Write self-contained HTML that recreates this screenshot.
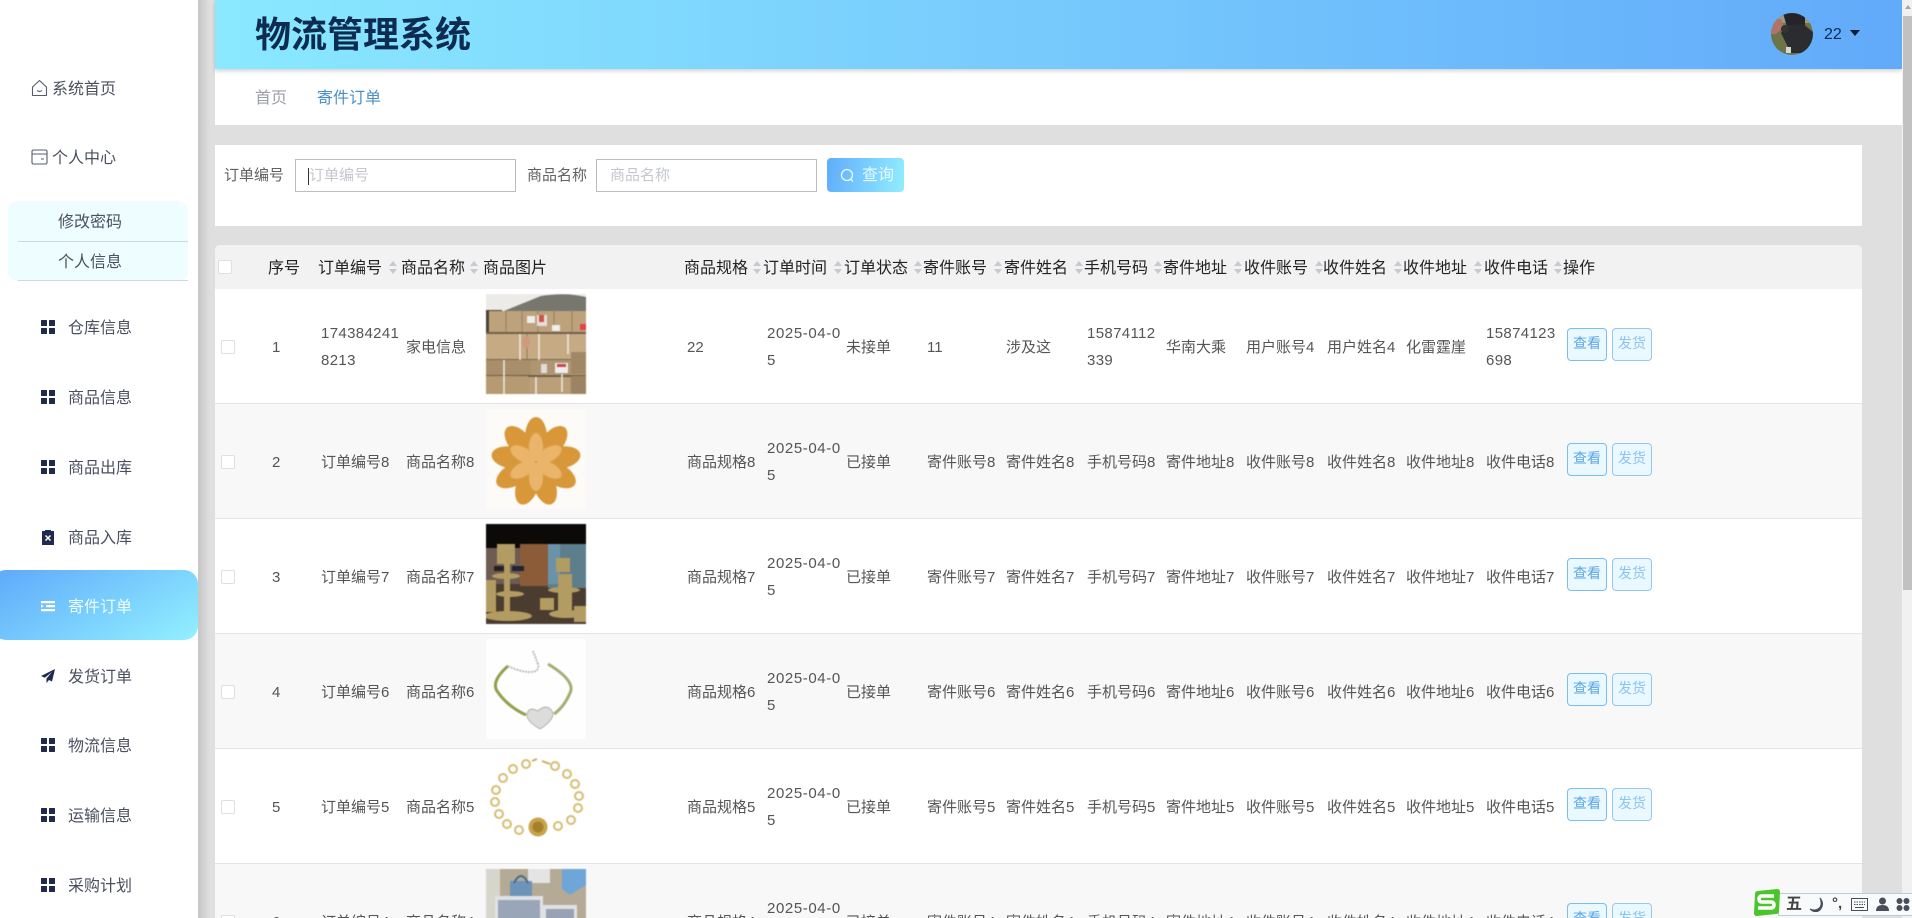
<!DOCTYPE html>
<html lang="zh"><head><meta charset="utf-8"><title>物流管理系统</title>
<style>
*{box-sizing:border-box}
html,body{margin:0;padding:0;width:1912px;height:918px;overflow:hidden;background:#dfdfdf;font-family:"Liberation Sans","Noto Sans CJK SC",sans-serif;color:#444}
#page{position:relative;width:1912px;height:918px;overflow:hidden;background:#dfdfdf}
.a{position:absolute}
#side{left:0;top:0;width:198px;height:918px;background:#fff;z-index:3}
#shadow{left:198px;top:0;width:12px;height:918px;background:linear-gradient(90deg,#c6c6c6,#dfdfdf);z-index:2}
.it{position:absolute;left:68px;font-size:16px;line-height:24px;color:#4b5060;white-space:nowrap;transform:translateY(-10px)}
.ic{position:absolute;left:41px;width:14px;height:14px;transform:translateY(-7px)}
.grid{display:grid;grid-template-columns:6px 6px;grid-template-rows:6px 6px;gap:2px}
.grid i{background:#1f2a4d;display:block;border-radius:.5px}
#hd{left:215px;top:0;width:1687px;height:69px;background:linear-gradient(90deg,#8ae9ff,#62aafa);box-shadow:0 2px 4px rgba(0,0,0,.18);z-index:2}
#bc{left:215px;top:69px;width:1687px;height:56px;background:#fff}
#q{left:215px;top:145px;width:1647px;height:81px;background:#fff}
.inp{position:absolute;top:159px;height:33px;width:221px;background:#fff;border:1px solid #bdbdbd;font-size:15px;line-height:31px;color:#c4c7cd}
.lab{position:absolute;top:164px;font-size:15px;line-height:24px;color:#606266}
#thbg{left:215px;top:245px;width:1647px;height:44px;background:#f2f2f2;border-radius:5px 5px 0 0}
.th{position:absolute;top:257px;font-size:16px;line-height:24px;color:#222;white-space:nowrap}
.car{position:absolute;top:261px;width:8px;height:13px;margin-left:-1px}
.car:before,.car:after{content:"";position:absolute;left:0;border-left:4px solid transparent;border-right:4px solid transparent}
.car:before{top:0;border-bottom:5px solid #c6cad0}
.car:after{bottom:0;border-top:5px solid #c6cad0}
table{position:absolute;left:215px;top:289px;width:1647px;table-layout:fixed;border-collapse:separate;border-spacing:0;font-size:15px;line-height:27px;color:#555}
td{height:115px;padding:2px 0 0 3px;border-bottom:1px solid #e4e4e4;vertical-align:middle;white-space:nowrap;overflow:hidden;background:#fff;position:relative}
tr:nth-child(even) td{background:#f8f8f8}
.n{letter-spacing:.35px}.d{letter-spacing:.6px}
td.im{vertical-align:top;padding:5px 0 0 1px}
td.im svg{display:block;width:100px;height:100px;filter:blur(.4px)}
td.op{vertical-align:top;padding:39px 0 0 3px}
.b{display:inline-block;width:40px;height:33px;border:1px solid #7cbdf0;border-radius:4px;background:#eaf8ff;color:#5aa6e6;font-size:14px;line-height:29px;text-align:center;margin-right:5px;vertical-align:top}
.b.l{color:#8cc4f2;border-color:#92c8f2}
.cb{position:absolute;left:6px;top:51px;width:14px;height:14px;background:#fff;border:1px solid #dcdfe6;border-radius:2px}
</style></head><body><div id="page">

<div class="a" id="side">
<svg class="ic" style="left:31px;top:88px;width:17px;height:18px;transform:translateY(-9px)" viewBox="0 0 17 18" fill="none" stroke="#555c70" stroke-width="1.1"><path d="M8.5 1.5L1.5 8v8.5h14V8z" stroke-linejoin="round"/><path d="M6 11.5q2.5 2 5 0"/></svg>
<div class="it" style="left:52px;top:88px">系统首页</div>
<svg class="ic" style="left:31px;top:157px;width:17px;height:16px;transform:translateY(-8px)" viewBox="0 0 17 16" fill="none" stroke="#555c70" stroke-width="1.1"><rect x="1" y="1" width="15" height="14" rx="1.5"/><path d="M1 5h15M10 10h3"/></svg>
<div class="it" style="left:52px;top:157px">个人中心</div>

<div class="a" style="left:8px;top:201px;width:180px;height:80px;background:#eefdff;border-radius:10px"></div>
<div class="a" style="left:18px;top:241px;width:170px;height:1px;background:#cfd9de"></div>
<div class="a" style="left:18px;top:280px;width:170px;height:1px;background:#cfd9de"></div>
<div class="it" style="left:58px;top:221px">修改密码</div>
<div class="it" style="left:58px;top:261px">个人信息</div>

<div class="ic grid" style="top:327px"><i></i><i></i><i></i><i></i></div><div class="it" style="top:327px">仓库信息</div>
<div class="ic grid" style="top:397px"><i></i><i></i><i></i><i></i></div><div class="it" style="top:397px">商品信息</div>
<div class="ic grid" style="top:467px"><i></i><i></i><i></i><i></i></div><div class="it" style="top:467px">商品出库</div>
<svg class="ic" style="top:537px;height:16px;transform:translateY(-8px)" viewBox="0 0 14 16"><path d="M1 2h3V1h6v1h3v14H1z" fill="#1f2a4d"/><path d="M4.5 6.5l5 5M9.5 6.5l-5 5" stroke="#fff" stroke-width="1.5"/></svg>
<div class="it" style="top:537px">商品入库</div>

<div class="a" style="left:-8px;top:570px;width:206px;height:70px;border-radius:14px;background:linear-gradient(150deg,#5ea8fb,#92f1ff)"></div>
<svg class="ic" style="top:606px" viewBox="0 0 14 14" fill="#fff"><path d="M0 2h14v2.200H0zM5 6h9v2.200H5zM0 10h14v2.200H0zM0 5.500l3 1.600-3 1.600z"/></svg>
<div class="it" style="top:606px;color:#eefcff">寄件订单</div>
<svg class="ic" style="top:676px" viewBox="0 0 14 14"><path d="M14 0L0 7l3.800 1.800L11 3 5.500 9.500V14l2.500-3 3 1.500z" fill="#1f2a4d"/></svg>
<div class="it" style="top:676px">发货订单</div>
<div class="ic grid" style="top:745px"><i></i><i></i><i></i><i></i></div><div class="it" style="top:745px">物流信息</div>
<div class="ic grid" style="top:815px"><i></i><i></i><i></i><i></i></div><div class="it" style="top:815px">运输信息</div>
<div class="ic grid" style="top:885px"><i></i><i></i><i></i><i></i></div><div class="it" style="top:885px">采购计划</div>
</div>
<div class="a" id="shadow"></div>

<div class="a" id="hd">
<div class="a" style="left:40px;top:10px;font-size:36px;line-height:50px;font-weight:700;color:#0e2b52;white-space:nowrap">物流管理系统</div>
<svg class="a" style="left:1556px;top:13px" width="42" height="42" viewBox="0 0 42 42"><defs><clipPath id="av"><circle cx="21" cy="21" r="21"/></clipPath></defs><g clip-path="url(#av)"><rect width="42" height="42" fill="#6f7348"/><rect width="42" height="10" fill="#9a9a8a"/><path d="M12 0h22v14H16z" fill="#24242a"/><path d="M0 6h10l3 8-8 7H0z" fill="#b0736a"/><path d="M10 20l6-8 16-1 10 8v12l-10 9H20z" fill="#2a2c30"/><circle cx="14" cy="16" r="4" fill="#333"/><rect x="15" y="34" width="5" height="6" fill="#d8d8d0"/></g></svg>
<div class="a" style="left:1609px;top:23px;font-size:16px;line-height:24px;color:#0a2a55">22</div>
<div class="a" style="left:1635px;top:30px;border-left:5px solid transparent;border-right:5px solid transparent;border-top:6px solid #0a1a30"></div>
</div>

<div class="a" id="bc">
<div class="a" style="left:40px;top:18px;font-size:16px;line-height:24px;color:#9a9ea6">首页</div>
<div class="a" style="left:102px;top:18px;font-size:16px;line-height:24px;color:#4a90c8">寄件订单</div>
</div>

<div class="a" id="q"></div>
<div class="lab" style="left:224px">订单编号</div>
<div class="inp" style="left:295px;padding-left:13px">订单编号<span class="a" style="left:12px;top:8px;width:1px;height:17px;background:#333"></span></div>
<div class="lab" style="left:527px">商品名称</div>
<div class="inp" style="left:596px;padding-left:13px">商品名称</div>
<div class="a" style="left:827px;top:158px;width:77px;height:34px;border-radius:4px;background:linear-gradient(100deg,#60acfb,#92edff)"></div>
<svg class="a" style="left:840px;top:168px" width="15" height="15" viewBox="0 0 15 15" fill="none" stroke="#e8fbff" stroke-width="1.300"><circle cx="7" cy="7" r="5.500"/><path d="M10.500 11l2.500 2.500"/></svg>
<div class="a" style="left:862px;top:164px;font-size:16px;line-height:24px;color:#e6fbff">查询</div>

<div class="a" id="thbg"></div>
<div class="a" style="left:218px;top:260px;width:14px;height:14px;background:#fff;border:1px solid #dcdfe6;border-radius:2px"></div>
<div class="th" style="left:268px">序号</div>
<div class="th" style="left:318px">订单编号</div><i class="car" style="left:390px"></i>
<div class="th" style="left:401px">商品名称</div><i class="car" style="left:471px"></i>
<div class="th" style="left:483px">商品图片</div>
<div class="th" style="left:684px">商品规格</div><i class="car" style="left:754px"></i>
<div class="th" style="left:763px">订单时间</div><i class="car" style="left:835px"></i>
<div class="th" style="left:844px">订单状态</div><i class="car" style="left:915px"></i>
<div class="th" style="left:923px">寄件账号</div><i class="car" style="left:995px"></i>
<div class="th" style="left:1004px">寄件姓名</div><i class="car" style="left:1076px"></i>
<div class="th" style="left:1084px">手机号码</div><i class="car" style="left:1155px"></i>
<div class="th" style="left:1163px">寄件地址</div><i class="car" style="left:1235px"></i>
<div class="th" style="left:1244px">收件账号</div><i class="car" style="left:1316px"></i>
<div class="th" style="left:1323px">收件姓名</div><i class="car" style="left:1395px"></i>
<div class="th" style="left:1403px">收件地址</div><i class="car" style="left:1475px"></i>
<div class="th" style="left:1484px">收件电话</div><i class="car" style="left:1555px"></i>
<div class="th" style="left:1563px">操作</div>

<table>
<colgroup><col style="width:54px"><col style="width:49px"><col style="width:85px"><col style="width:82px"><col style="width:199px"><col style="width:80px"><col style="width:79px"><col style="width:81px"><col style="width:79px"><col style="width:81px"><col style="width:79px"><col style="width:80px"><col style="width:81px"><col style="width:79px"><col style="width:80px"><col style="width:81px"><col></colgroup>
<tbody>
<tr><td><i class="cb"></i></td><td>1</td><td class="n">174384241<br>8213</td><td>家电信息</td>
<td class="im"><svg viewBox="0 0 100 100"><rect width="100" height="100" fill="#b49a78"/><rect width="100" height="18" fill="#ecebe8"/><path d="M18 17Q40 8 55 2Q80 -2 100 3V20H18z" fill="#77776f"/><path d="M0 16h16v26H0z" fill="#4a4438"/><rect x="3" y="17" width="97" height="21" fill="#bea27c"/><path d="M20 17v21M36 17v21M52 17v21M68 17v21M86 17v21" stroke="#8f7b5c" stroke-width=".8"/><rect y="38" width="100" height="3" fill="#6f6048"/><rect y="40" width="100" height="25" fill="#c6aa84"/><path d="M41 40v25" stroke="#8f7b5c"/><rect y="65" width="100" height="2" fill="#7a6a50"/><rect y="66" width="45" height="15" fill="#a88e6a"/><rect x="45" y="66" width="40" height="14" fill="#b09670"/><rect x="85" y="58" width="15" height="22" fill="#a08866"/><rect y="81" width="100" height="2" fill="#6f6048"/><rect y="82" width="42" height="18" fill="#b69a72"/><rect x="43" y="83" width="41" height="15" fill="#bb9f78"/><rect x="85" y="82" width="15" height="18" fill="#9c8462"/><path d="M34 40v26M18 40v0M53 40v26M82 40v20M18 66v34M50 83v17M76 80v18" stroke="#f0ebe2" stroke-width="1.500"/><rect x="41" y="22" width="8" height="7" fill="#eee"/><rect x="51" y="21" width="10" height="11" fill="#e8dede"/><rect x="53" y="21" width="5" height="7" fill="#c54"/><rect x="66" y="31" width="8" height="6" fill="#eee"/><rect x="69" y="69" width="13" height="10" fill="#eee"/><rect x="71" y="70" width="9" height="3" fill="#c44"/><rect x="55" y="70" width="6" height="9" fill="#ddd"/><rect x="94" y="30" width="6" height="6" fill="#d44"/><ellipse cx="40" cy="48" rx="4" ry="6" fill="#cf9a7c"/></svg></td>
<td>22</td><td class="d">2025-04-0<br>5</td><td>未接单</td><td>11</td><td>涉及这</td><td class="n">15874112<br>339</td><td>华南大乘</td><td>用户账号4</td><td>用户姓名4</td><td>化雷霆崖</td><td class="n">15874123<br>698</td><td class="op"><span class="b">查看</span><span class="b l">发货</span></td></tr>

<tr><td><i class="cb"></i></td><td>2</td><td>订单编号8</td><td>商品名称8</td>
<td class="im"><svg viewBox="0 0 100 100"><rect width="100" height="100" fill="#fcfbf8"/><g fill="#d8983a"><ellipse cx="50" cy="28" rx="11" ry="20"/><ellipse cx="50" cy="28" rx="11" ry="20" transform="rotate(40 50 53)"/><ellipse cx="50" cy="28" rx="11" ry="20" transform="rotate(80 50 53)"/><ellipse cx="50" cy="28" rx="11" ry="20" transform="rotate(120 50 53)"/><ellipse cx="50" cy="28" rx="11" ry="20" transform="rotate(160 50 53)"/><ellipse cx="50" cy="28" rx="11" ry="20" transform="rotate(200 50 53)"/><ellipse cx="50" cy="28" rx="11" ry="20" transform="rotate(240 50 53)"/><ellipse cx="50" cy="28" rx="11" ry="20" transform="rotate(280 50 53)"/><ellipse cx="50" cy="28" rx="11" ry="20" transform="rotate(320 50 53)"/><circle cx="50" cy="53" r="22"/></g><g fill="#eab56a"><ellipse cx="50" cy="38" rx="7" ry="14"/><ellipse cx="50" cy="38" rx="7" ry="14" transform="rotate(60 50 53)"/><ellipse cx="50" cy="38" rx="7" ry="14" transform="rotate(120 50 53)"/><ellipse cx="50" cy="38" rx="7" ry="14" transform="rotate(180 50 53)"/><ellipse cx="50" cy="38" rx="7" ry="14" transform="rotate(240 50 53)"/><ellipse cx="50" cy="38" rx="7" ry="14" transform="rotate(300 50 53)"/></g></svg></td>
<td>商品规格8</td><td class="d">2025-04-0<br>5</td><td>已接单</td><td>寄件账号8</td><td>寄件姓名8</td><td>手机号码8</td><td>寄件地址8</td><td>收件账号8</td><td>收件姓名8</td><td>收件地址8</td><td>收件电话8</td><td class="op"><span class="b">查看</span><span class="b l">发货</span></td></tr>

<tr><td><i class="cb"></i></td><td>3</td><td>订单编号7</td><td>商品名称7</td>
<td class="im"><svg viewBox="0 0 100 100"><rect width="100" height="100" fill="#4a3d30"/><rect width="100" height="24" fill="#0c0a08"/><rect y="24" width="34" height="36" fill="#6e5c52"/><rect x="34" y="20" width="28" height="42" fill="#8c5c38"/><rect x="62" y="20" width="38" height="44" fill="#5d7f8c"/><rect x="62" y="20" width="12" height="40" fill="#6a93aa"/><g fill="#b39c62"><rect x="11" y="20" width="18" height="20"/><rect x="18" y="40" width="6" height="50"/><ellipse cx="20" cy="52" rx="14" ry="3"/><ellipse cx="24" cy="70" rx="14" ry="3"/><ellipse cx="22" cy="92" rx="24" ry="5"/><rect x="0" y="56" width="10" height="32"/><rect x="70" y="34" width="14" height="14"/><rect x="72" y="50" width="14" height="40"/><ellipse cx="78" cy="66" rx="16" ry="3"/><ellipse cx="80" cy="90" rx="17" ry="4"/><rect x="88" y="82" width="12" height="16"/><rect x="54" y="74" width="14" height="12"/></g><rect x="8" y="42" width="10" height="5" fill="#222"/><rect x="26" y="42" width="12" height="5" fill="#223"/></svg></td>
<td>商品规格7</td><td class="d">2025-04-0<br>5</td><td>已接单</td><td>寄件账号7</td><td>寄件姓名7</td><td>手机号码7</td><td>寄件地址7</td><td>收件账号7</td><td>收件姓名7</td><td>收件地址7</td><td>收件电话7</td><td class="op"><span class="b">查看</span><span class="b l">发货</span></td></tr>

<tr><td><i class="cb"></i></td><td>4</td><td>订单编号6</td><td>商品名称6</td>
<td class="im"><svg viewBox="0 0 100 100"><rect width="100" height="100" fill="#fefefe"/><path d="M22 27Q5 42 11 52Q22 68 40 76" fill="none" stroke="#8fa04a" stroke-width="3"/><path d="M62 25Q90 42 84 54Q78 68 68 75" fill="none" stroke="#a2ae72" stroke-width="3"/><path d="M22 27Q34 33 44 33T52 25" fill="none" stroke="#b8b8b8" stroke-width="1.800" stroke-dasharray="2 1"/><path d="M52 25l-5-13" stroke="#bbb" stroke-width="2" stroke-dasharray="2 1"/><path d="M52 72q8-8 14 0q4 8-12 18q-14-8-13-15q2-8 11-3z" fill="#dcdcda" stroke="#b0b0b0"/></svg></td>
<td>商品规格6</td><td class="d">2025-04-0<br>5</td><td>已接单</td><td>寄件账号6</td><td>寄件姓名6</td><td>手机号码6</td><td>寄件地址6</td><td>收件账号6</td><td>收件姓名6</td><td>收件地址6</td><td>收件电话6</td><td class="op"><span class="b">查看</span><span class="b l">发货</span></td></tr>

<tr><td><i class="cb"></i></td><td>5</td><td>订单编号5</td><td>商品名称5</td>
<td class="im"><svg viewBox="0 0 100 100"><rect width="100" height="100" fill="#fff"/><g fill="none" stroke="#d6bd72" stroke-width="2"><circle cx="69" cy="12" r="4"/><circle cx="81" cy="20" r="4"/><circle cx="89" cy="30" r="4"/><circle cx="93" cy="42" r="4"/><circle cx="92" cy="54" r="4"/><circle cx="85" cy="66" r="4"/><circle cx="72" cy="72" r="4"/><circle cx="33" cy="76" r="4"/><circle cx="21" cy="70" r="4"/><circle cx="13" cy="60" r="4"/><circle cx="9" cy="48" r="4"/><circle cx="10" cy="36" r="4"/><circle cx="17" cy="24" r="4"/><circle cx="27" cy="15" r="4"/><circle cx="40" cy="10" r="4"/></g><path d="M46 7l5-2M56 7l8 3" stroke="#c8ad60" stroke-width="2"/><circle cx="52" cy="73" r="9.500" fill="#c9a34a"/><circle cx="52" cy="73" r="5.500" fill="#a67f2c"/></svg></td>
<td>商品规格5</td><td class="d">2025-04-0<br>5</td><td>已接单</td><td>寄件账号5</td><td>寄件姓名5</td><td>手机号码5</td><td>寄件地址5</td><td>收件账号5</td><td>收件姓名5</td><td>收件地址5</td><td>收件电话5</td><td class="op"><span class="b">查看</span><span class="b l">发货</span></td></tr>

<tr><td><i class="cb"></i></td><td>6</td><td>订单编号4</td><td>商品名称4</td>
<td class="im"><svg viewBox="0 0 100 100"><rect width="100" height="100" fill="#b5aa96"/><rect width="14" height="100" fill="#d6d6cc"/><path d="M76 0h24v16l-16 10-8-6z" fill="#6ea6d8"/><rect x="42" y="0" width="22" height="14" fill="#e4e4e4"/><rect x="24" y="12" width="22" height="22" fill="#6c94b8"/><path d="M28 14Q35 0 42 14" fill="none" stroke="#4a6a88" stroke-width="2"/><rect x="9" y="27" width="48" height="73" fill="#dfe2e4"/><rect x="12" y="31" width="42" height="24" fill="#9aa6b8"/><rect x="57" y="36" width="34" height="64" fill="#dfe2e4"/><rect x="60" y="40" width="28" height="24" fill="#98a2b4"/></svg></td>
<td>商品规格4</td><td class="d">2025-04-0<br>5</td><td>已接单</td><td>寄件账号4</td><td>寄件姓名4</td><td>手机号码4</td><td>寄件地址4</td><td>收件账号4</td><td>收件姓名4</td><td>收件地址4</td><td>收件电话4</td><td class="op"><span class="b">查看</span><span class="b l">发货</span></td></tr>
</tbody></table>

<div class="a" style="left:1902px;top:0;width:10px;height:918px;background:#f1f1f1;z-index:4"></div>
<div class="a" style="left:1903px;top:16px;width:9px;height:574px;background:#c1c1c1;z-index:5"></div>
<div class="a" style="left:1905px;top:5px;border-left:3px solid transparent;border-right:3px solid transparent;border-bottom:4px solid #a3a3a3;z-index:5"></div>

<div class="a" style="left:1778px;top:893px;width:134px;height:23px;background:#f8fafc;border:1px solid #bccbd9;border-right:0;z-index:6"></div>
<svg class="a" style="left:1752px;top:888px;z-index:7" width="29" height="29" viewBox="0 0 29 29"><path d="M6 3L25 1q3 0 3 3l-1 19q0 3-3 3L5 28q-3 0-3-3L3 6q0-3 3-3z" fill="#4cc52c"/><path d="M22 8H10q-3 0-3 3t3 3h9q3 0 3 3t-3 3H6" fill="none" stroke="#fff" stroke-width="3.500"/></svg>
<div class="a" style="left:1786px;top:894px;font-size:16px;font-weight:700;line-height:22px;color:#444;z-index:7">五</div>
<svg class="a" style="left:1809px;top:897px;z-index:7" width="15" height="15" viewBox="0 0 15 15"><path d="M11 1q3 8-2 11-4 2-8 0 5 5 10 1 5-6 0-12z" fill="#4a4e5a" stroke="#4a4e5a"/></svg>
<div class="a" style="left:1832px;top:893px;font-size:15px;line-height:22px;font-weight:700;color:#444;z-index:7">°,</div>
<svg class="a" style="left:1851px;top:898px;z-index:7" width="17" height="13" viewBox="0 0 17 13" fill="none" stroke="#4a4e5a"><rect x=".5" y=".5" width="16" height="12"/><path d="M3 4h11M3 6.500h11" stroke-dasharray="1.500 1"/><path d="M4 9.500h9"/></svg>
<svg class="a" style="left:1876px;top:897px;z-index:7" width="13" height="15" viewBox="0 0 13 15" fill="#4a4e5a"><circle cx="6.500" cy="4" r="3.500"/><path d="M0 14q0-6 6.500-6T13 14z"/></svg>
<svg class="a" style="left:1896px;top:898px;z-index:7" width="14" height="13" viewBox="0 0 14 13" fill="#4a4e5a"><circle cx="3.500" cy="3" r="3"/><circle cx="10.500" cy="3" r="3"/><circle cx="3.500" cy="10" r="3"/><circle cx="10.500" cy="10" r="3"/></svg>
</div></body></html>
